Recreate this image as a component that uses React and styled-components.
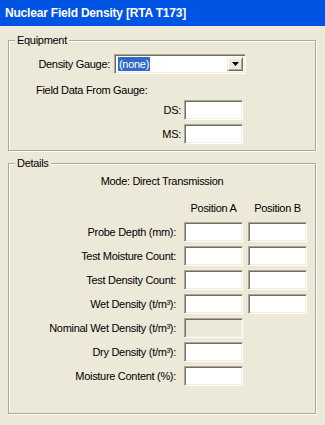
import { Fragment } from "react";
import styled, { createGlobalStyle } from "styled-components";

const GlobalStyle = createGlobalStyle`
  body {
    margin: 0;
    background: #ece9d8;
    font-family: "Liberation Sans", Arial, sans-serif;
    font-size: 11px;
    color: #000;
  }
`;

const Window = styled.div`
  width: 325px;
  height: 425px;
  background: #ece9d8;
  display: flex;
  flex-direction: column;
  overflow: hidden;
`;

const TitleBar = styled.div`
  height: 26px;
  background: #0054e3;
  color: #fff;
  font-weight: bold;
  font-size: 12px;
  letter-spacing: -0.2px;
  display: flex;
  align-items: center;
  padding-left: 5px;
`;

const Content = styled.div`
  padding: 8px 0 0 8px;
  letter-spacing: -0.3px;
`;

const Group = styled.fieldset`
  width: 308px;
  box-sizing: border-box;
  margin: ${(p) => (p.$first ? "0" : "6px 0 0")};
  padding: 0 0 ${(p) => p.$bottom}px;
  min-width: 0;
  border: 1px solid #aca899;
  box-shadow: 1px 1px 0 #fff, inset 1px 1px 0 #fff;
`;

const Legend = styled.legend`
  margin-left: 6px;
  padding: 0 2px;
  line-height: 13px;
  background: #ece9d8;
`;

const Row = styled.div`
  display: flex;
  align-items: center;
  gap: ${(p) => p.$gap}px;
  margin-top: ${(p) => p.$top}px;
`;

const RowLabel = styled.span`
  width: ${(p) => p.$width}px;
  text-align: right;
  line-height: 13px;
  white-space: nowrap;
`;

const Caption = styled.div`
  line-height: 13px;
  margin-top: ${(p) => p.$top}px;
  margin-left: ${(p) => p.$left || 0}px;
  text-align: ${(p) => (p.$center ? "center" : "left")};
`;

const sunken = `
  border: 1px solid;
  border-color: #aca899 #fff #fff #aca899;
  box-shadow: inset 1px 1px 0 #716f64, inset -1px -1px 0 #f1efe2;
`;

const TextBox = styled.input`
  box-sizing: border-box;
  width: 59px;
  height: 20px;
  margin: 0;
  padding: 0 3px;
  font: inherit;
  background: ${(p) => (p.disabled ? "#ece9d8" : "#fff")};
  ${sunken}
  outline: none;
`;

const Combo = styled.div`
  box-sizing: border-box;
  width: 132px;
  height: 20px;
  padding: 2px;
  background: #fff;
  display: flex;
  align-items: stretch;
  ${sunken}
`;

const ComboValue = styled.div`
  flex: 1;
  display: flex;
  align-items: center;
`;

const Selected = styled.span`
  background: #316ac5;
  color: #fff;
  line-height: 14px;
  padding: 0 1px;
  margin-left: 1px;
`;

const DropButton = styled.div`
  width: 16px;
  box-sizing: border-box;
  background: #ece9d8;
  border: 1px solid;
  border-color: #f1efe2 #716f64 #716f64 #f1efe2;
  box-shadow: inset 1px 1px 0 #fff, inset -1px -1px 0 #aca899;
  display: flex;
  align-items: center;
  justify-content: center;
`;

const DetailGrid = styled.div`
  display: grid;
  grid-template-columns: 175px 59px 64px;
  row-gap: 4px;
  margin-top: 14px;
`;

const GridLabel = styled.span`
  padding-right: 8px;
  text-align: right;
  line-height: 20px;
  white-space: nowrap;
`;

const ColHead = styled.span`
  width: 59px;
  text-align: center;
  line-height: 13px;
  margin-bottom: 3px;
  justify-self: end;
  white-space: nowrap;
`;

const Cell = styled.div`
  justify-self: end;
  display: flex;
`;

const rows = [
  { label: "Probe Depth (mm):", cols: 2 },
  { label: "Test Moisture Count:", cols: 2 },
  { label: "Test Density Count:", cols: 2 },
  { label: "Wet Density (t/m³):", cols: 2 },
  { label: "Nominal Wet Density (t/m³):", cols: 1, disabled: true },
  { label: "Dry Density (t/m³):", cols: 1 },
  { label: "Moisture Content (%):", cols: 1 },
];

export default function App() {
  return (
    <Window>
      <GlobalStyle />
      <TitleBar>Nuclear Field Density [RTA T173]</TitleBar>
      <Content>
        <Group $first $bottom={6}>
          <Legend>Equipment</Legend>
          <Row $gap={4} $top={7}>
            <RowLabel $width={101}>Density Gauge:</RowLabel>
            <Combo>
              <ComboValue>
                <Selected>(none)</Selected>
              </ComboValue>
              <DropButton>
                <svg width="7" height="4" viewBox="0 0 7 4">
                  <path d="M0 0h7L3.5 4z" fill="#000" />
                </svg>
              </DropButton>
            </Combo>
          </Row>
          <Caption $top={10} $left={27}>
            Field Data From Gauge:
          </Caption>
          <Row $gap={3} $top={3}>
            <RowLabel $width={172}>DS:</RowLabel>
            <TextBox />
          </Row>
          <Row $gap={3} $top={4}>
            <RowLabel $width={172}>MS:</RowLabel>
            <TextBox />
          </Row>
        </Group>

        <Group $bottom={27}>
          <Legend>Details</Legend>
          <Caption $top={5} $center>
            Mode: Direct Transmission
          </Caption>
          <DetailGrid>
            <span />
            <ColHead>Position A</ColHead>
            <ColHead>Position B</ColHead>
            {rows.map((r) => (
              <Fragment key={r.label}>
                <GridLabel>{r.label}</GridLabel>
                <Cell>
                  <TextBox disabled={r.disabled} />
                </Cell>
                {r.cols === 2 ? (
                  <Cell>
                    <TextBox />
                  </Cell>
                ) : (
                  <span />
                )}
              </Fragment>
            ))}
          </DetailGrid>
        </Group>
      </Content>
    </Window>
  );
}
